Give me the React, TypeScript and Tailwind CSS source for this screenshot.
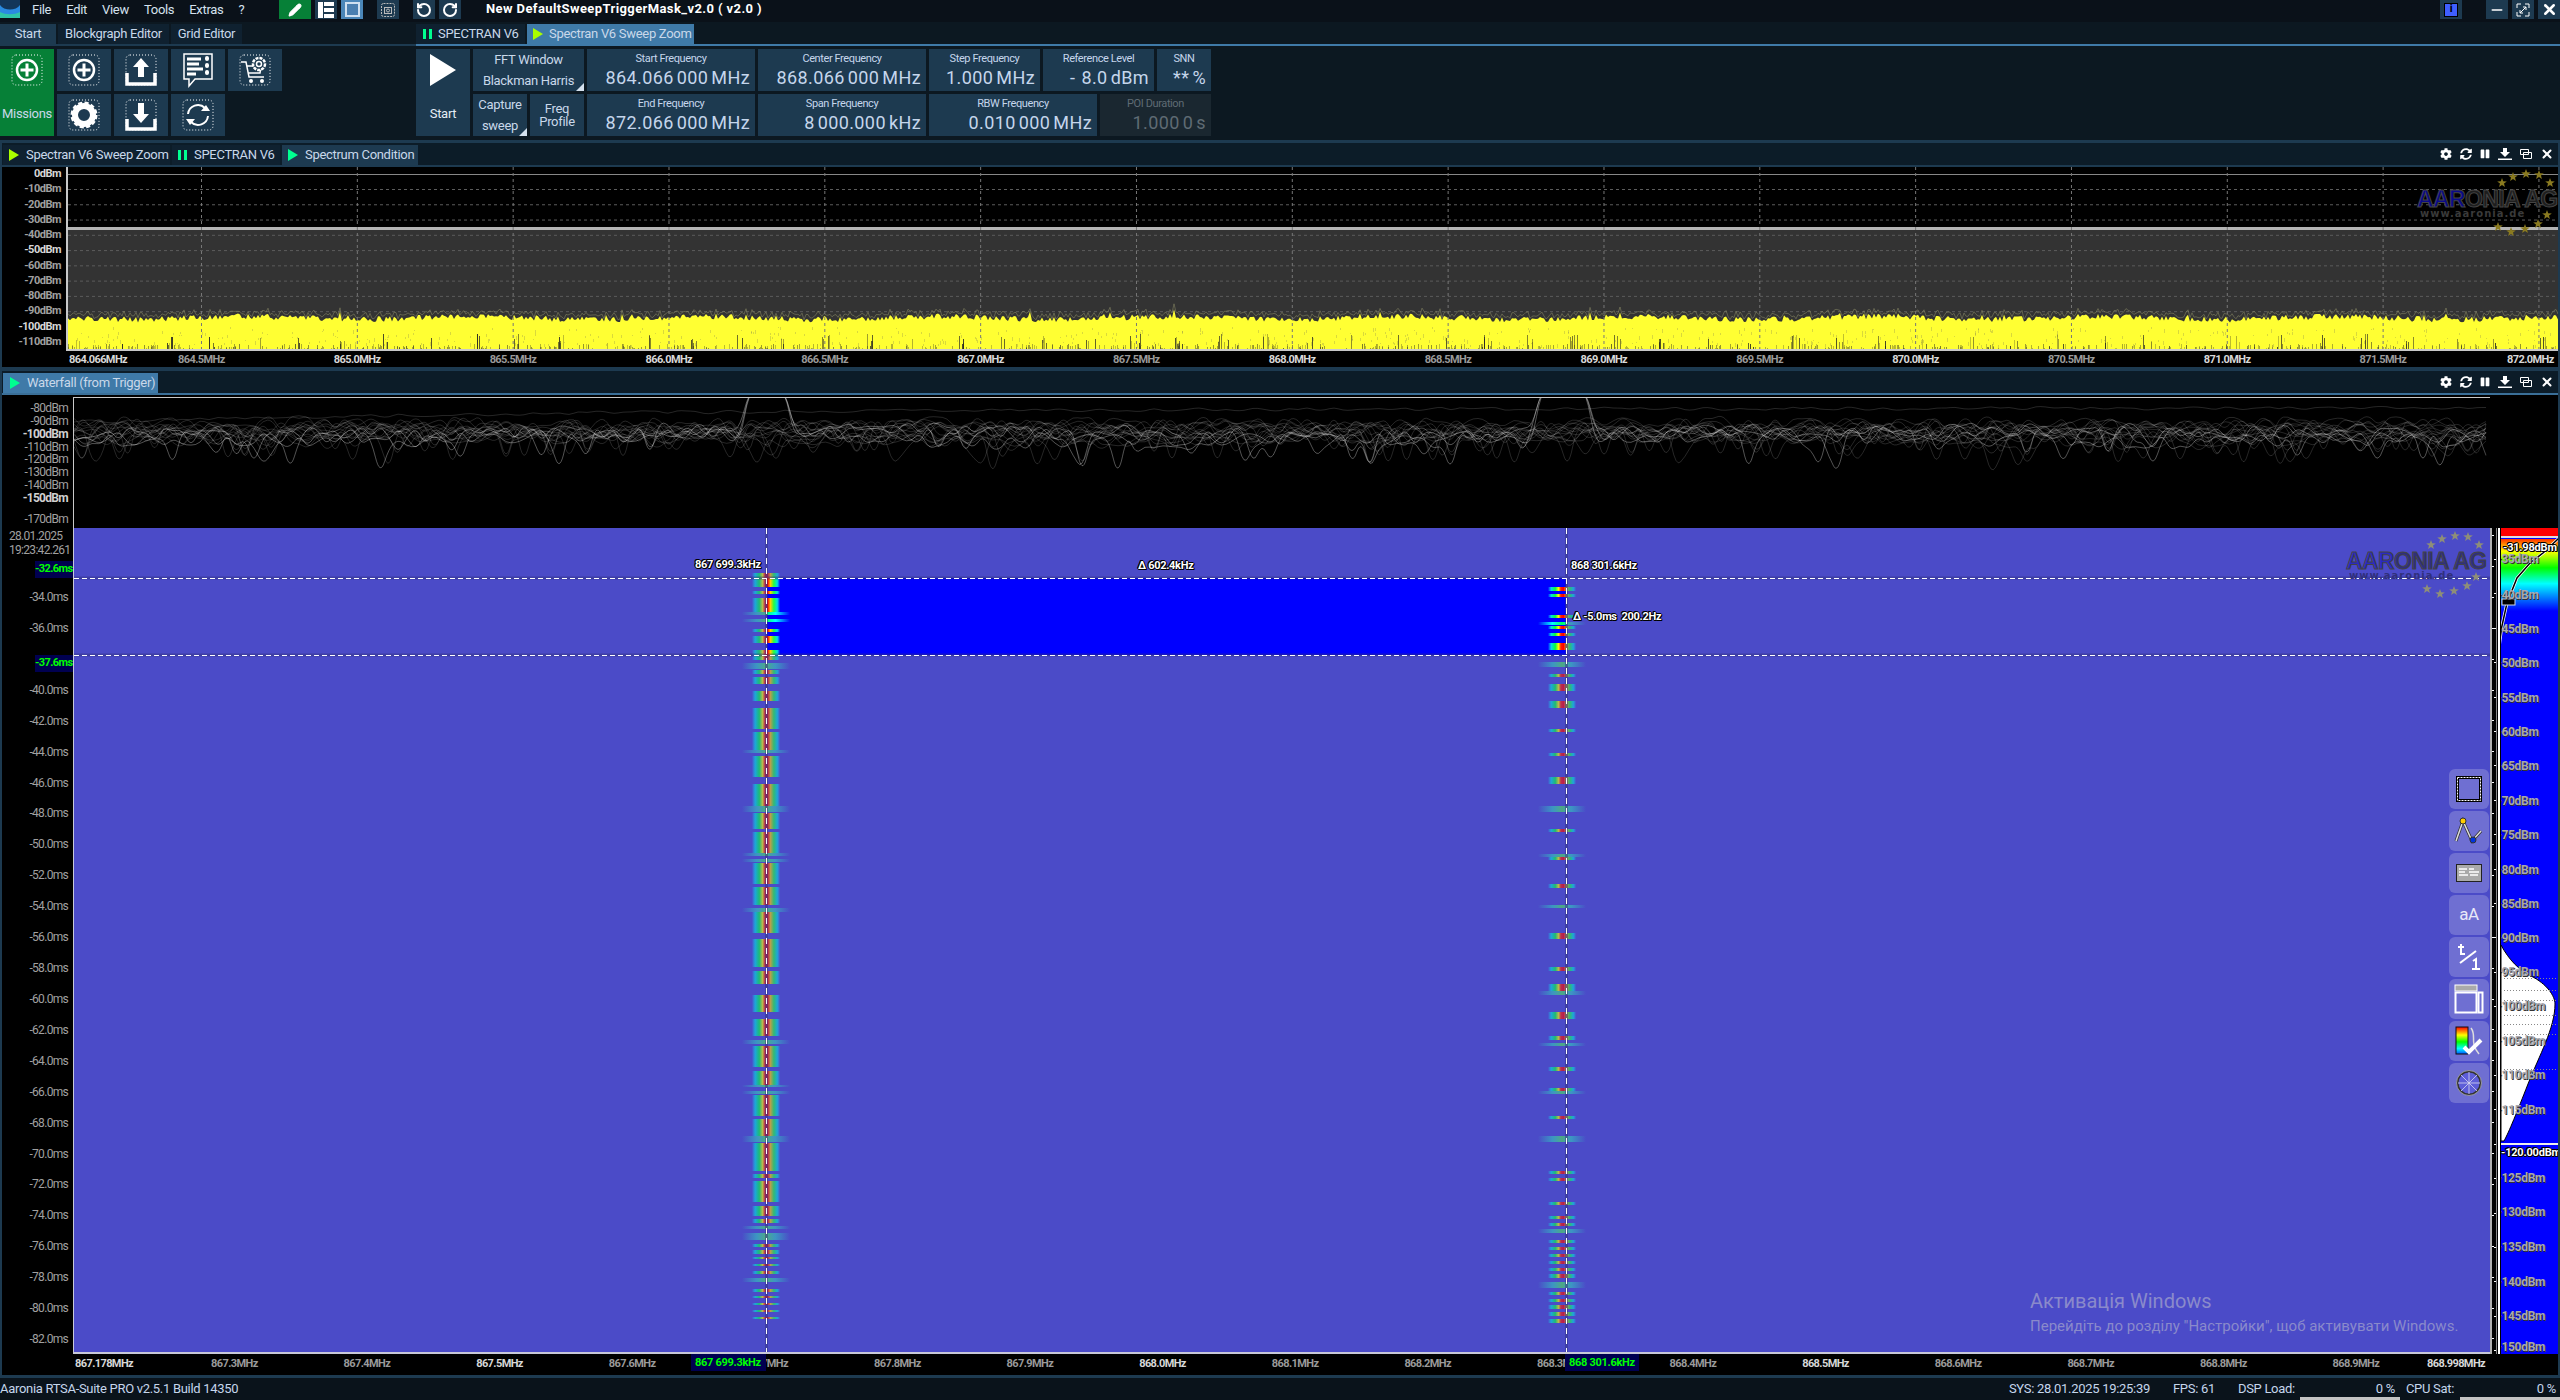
import { Pencil, RotateCcw, RotateCw, X, Minus } from "lucide-react";
import { FaCog, FaSyncAlt, FaPause } from "react-icons/fa";
import type { ReactNode } from "react";

const rng = (seed: number) => () => {
  seed = (seed + 0x6d2b79f5) | 0;
  let t = Math.imul(seed ^ (seed >>> 15), 1 | seed);
  t = (t + Math.imul(t ^ (t >>> 7), 61 | t)) ^ t;
  return ((t ^ (t >>> 14)) >>> 0) / 4294967296;
};

const OUTLINE = "[text-shadow:-1px_0_#000,1px_0_#000,0_-1px_#000,0_1px_#000,1px_1px_#000,-1px_-1px_#000]";

/* ---------- small icons ---------- */

const PlayMark = ({ color }: { color: string }) => (
  <svg width="10" height="12" viewBox="0 0 10 12" className="shrink-0"><path d="M0 0L10 6L0 12Z" fill={color} /></svg>
);
const PauseMark = () => (
  <svg width="9" height="10" viewBox="0 0 9 10" className="shrink-0"><path d="M0 0h3v10H0zM6 0h3v10H6z" fill="#00ff90" /></svg>
);

const Frame = ({ children }: { children: ReactNode }) => (
  <svg width="34" height="34" viewBox="0 0 34 34" fill="none">
    <rect x="2" y="2" width="30" height="30" rx="4" stroke="#fff" strokeWidth="1" strokeDasharray="1 2" />
    {children}
  </svg>
);

const PlusCircle = () => (
  <Frame>
    <circle cx="17" cy="17" r="10" stroke="#fff" strokeWidth="2.5" />
    <path d="M17 10.5v13M10.5 17h13" stroke="#fff" strokeWidth="3" />
  </Frame>
);
const UploadIcon = () => (
  <Frame>
    <path d="M17 5L25 14H20V24H14V14H9Z" fill="#fff" />
    <path d="M3 20V31H31V20" stroke="#fff" strokeWidth="3.5" />
  </Frame>
);
const DownloadIcon = () => (
  <Frame>
    <path d="M17 25L25 16H20V5H14V16H9Z" fill="#fff" />
    <path d="M3 21V31H31V21" stroke="#fff" strokeWidth="3.5" />
  </Frame>
);
const ListBubble = () => (
  <svg width="34" height="36" viewBox="0 0 34 36" fill="none">
    <path d="M3 2H31V27H14L8 34V27H3Z" stroke="#fff" strokeWidth="1.5" />
    <path d="M6 7h14M6 12h12M6 17h16M6 22h9" stroke="#fff" strokeWidth="3" />
    <path d="M26 6v1M26 13v1M26 20v1" stroke="#fff" strokeWidth="4" strokeLinecap="round" />
  </svg>
);
const CartGear = () => (
  <Frame>
    <path d="M3 9H8L11 24H26M9 13H23L22 20H10" stroke="#fff" strokeWidth="1.5" />
    <circle cx="13" cy="28" r="2" fill="#fff" />
    <circle cx="24" cy="28" r="2" fill="#fff" />
    <circle cx="21" cy="11" r="6" fill="#1d3a50" stroke="#fff" strokeWidth="2.5" strokeDasharray="3 1" />
    <circle cx="21" cy="11" r="2.5" stroke="#fff" strokeWidth="1.5" />
  </Frame>
);
const GearIcon = () => (
  <Frame>
    <circle cx="17" cy="17" r="9" stroke="#fff" strokeWidth="6" />
    <circle cx="17" cy="17" r="12" stroke="#fff" strokeWidth="3" strokeDasharray="4 2.3" />
  </Frame>
);
const RefreshIcon = () => (
  <Frame>
    <path d="M7 16A10 10 0 0 1 24 10M27 18A10 10 0 0 1 10 24" stroke="#fff" strokeWidth="2" />
    <path d="M20 13H29L25 7ZM14 21H5L9 27Z" fill="#fff" />
  </Frame>
);

const PanelIcons = () => (
  <div className="ml-auto flex items-center gap-[8px] pr-[4px] text-white">
    <FaCog size={12} />
    <FaSyncAlt size={12} />
    <FaPause size={10} />
    <svg width="14" height="12" viewBox="0 0 14 12"><path d="M5 0h4v4h3L7 9 2 4h3zM0 10.500h14V12H0z" fill="#fff" /></svg>
    <svg width="12" height="10" viewBox="0 0 12 10" fill="none" stroke="#fff"><path d="M.5.500h8v5h-8zM3.500 3.500h8v6h-8z" /></svg>
    <X size={14} strokeWidth={3.5} />
  </div>
);

/* ---------- top chrome ---------- */

const TitleBar = () => (
  <div className="flex h-[22px] items-start bg-[#0a1119] text-[13px] text-[#d5e1ee]">
    <svg width="20" height="18" viewBox="0 0 20 18" className="shrink-0">
      <rect width="20" height="18" fill="#13365a" />
      <path d="M0 5C4 11 16 11 20 5V18H0Z" fill="#2a8ae0" />
      <path d="M0 12C6 15 14 15 20 12V18H0Z" fill="#2fc4a8" />
    </svg>
    <div className="ml-[12px] flex w-[247px] gap-[15px] leading-[19px]">
      <span>File</span><span>Edit</span><span>View</span><span>Tools</span><span>Extras</span><span>?</span>
    </div>
    <div className="flex h-[19px] w-[32px] items-center justify-center bg-[#068037]"><Pencil size={14} fill="#fff" className="text-white" /></div>
    <div className="ml-[4px] flex h-[19px] w-[22px] items-center justify-center bg-[#1d3a50]">
      <svg width="16" height="16" viewBox="0 0 16 16" fill="#fff"><path d="M0 0h5v16H0zM6 0h10v4H6zM6 6h10v4H6zM6 12h10v4H6z" /></svg>
    </div>
    <div className="ml-[4px] flex h-[19px] w-[22px] items-center justify-center bg-[#4a86b8]"><div className="h-[15px] w-[15px] border-2 border-[#cfe0f0] bg-[#4a7fb0]" /></div>
    <div className="ml-[14px] flex h-[19px] w-[22px] items-center justify-center bg-[#1d3a50]">
      <svg width="14" height="14" viewBox="0 0 14 14" fill="none" stroke="#bbb"><rect x=".5" y=".5" width="13" height="13" rx="2" strokeDasharray="2 1" /><rect x="3.500" y="4.500" width="7" height="6" /><circle cx="7" cy="7.500" r="1.500" /></svg>
    </div>
    <div className="ml-[14px] flex h-[19px] w-[22px] items-center justify-center bg-[#1d3a50]"><RotateCcw size={16} strokeWidth={3} className="text-white" /></div>
    <div className="ml-[4px] flex h-[19px] w-[22px] items-center justify-center bg-[#1d3a50]"><RotateCw size={16} strokeWidth={3} className="text-white" /></div>
    <div className="ml-[25px] font-bold leading-[18px] tracking-[0.4px] text-white">New DefaultSweepTriggerMask_v2.0 ( v2.0 )</div>
    <div className="ml-auto flex h-[19px] w-[22px] items-center justify-center bg-[#1d3a50]">
      <div className="flex h-[14px] w-[14px] items-center justify-center border border-black bg-[#3f5fff] text-[11px] font-bold text-black">i</div>
    </div>
    <div className="ml-[24px] flex h-[19px] w-[22px] items-center justify-center bg-[#1d3a50]"><Minus size={16} strokeWidth={2.500} className="text-white" /></div>
    <div className="ml-[4px] flex h-[19px] w-[22px] items-center justify-center bg-[#1d3a50]">
      <svg width="14" height="14" viewBox="0 0 14 14" fill="none" stroke="#fff"><path d="M1 5V1h4M9 1h4v4M13 9v4H9M5 13H1V9" /><path d="M4 10l6-6M7 4h3v3M4 7v3h3" /></svg>
    </div>
    <div className="ml-[4px] flex h-[19px] w-[22px] items-center justify-center bg-[#1d3a50]"><X size={17} strokeWidth={3.500} className="text-white" /></div>
  </div>
);

const TabRow = () => (
  <div className="mt-[2px] flex h-[22px] items-end border-b-2 border-[#1d3a50] bg-[#0c1821] text-[13px] text-[#c9d8ea]">
    <div className="flex h-[20px] w-[56px] items-center justify-center bg-[#1d3a50]">Start</div>
    <div className="ml-[2px] flex h-[20px] w-[111px] items-center justify-center bg-[#0f2130]">Blockgraph Editor</div>
    <div className="ml-[2px] flex h-[20px] w-[71px] items-center justify-center bg-[#0f2130]">Grid Editor</div>
    <div className="relative top-[2px] ml-[174px] flex h-[22px] grow items-start border-b-2 border-[#3f7aa8]">
      <div className="flex h-[20px] w-[109px] items-center gap-[6px] bg-[#0f2130] pl-[7px]"><PauseMark />SPECTRAN V6</div>
      <div className="ml-[2px] flex h-[20px] w-[167px] items-center gap-[6px] bg-[#3f7aa8] pl-[6px]"><PlayMark color="#aaff00" />Spectran V6 Sweep Zoom</div>
    </div>
  </div>
);

const Cell = ({ className = "", children }: { className?: string; children: ReactNode }) => (
  <div className={`flex items-center justify-center bg-[#1d3a50] text-[#c9d8ea] ${className}`}>{children}</div>
);

const Corner = () => <div className="absolute bottom-0 right-0 h-0 w-0 border-b-[8px] border-l-[8px] border-b-[#d5e1ee] border-l-transparent" />;

const ValueCell = ({ label, value, className, dim }: { label: string; value: string; className: string; dim?: boolean }) => (
  <div className={`flex flex-col items-end ${dim ? "bg-[#1a2730] text-[#5f6b74]" : "bg-[#1d3a50] text-[#c5d6ec]"} ${className}`}>
    <div className="w-full pt-[2px] text-center text-[11px] leading-[15px] tracking-[-0.4px]">{label}</div>
    <div className="flex gap-[3px] pr-[5px] text-[18px] leading-[24px] tracking-[0.4px]">
      {value.split(" ").map((part, i) => <span key={i}>{part}</span>)}
    </div>
  </div>
);

const Ribbon = () => (
  <div className="flex h-[92px] bg-[#0c1821] pt-[3px]">
    <div className="grid h-[87px] grid-cols-[repeat(5,54px)] grid-rows-[repeat(2,42px)] gap-[3px]">
      <div className="row-span-2 flex flex-col items-center bg-[#068037] pt-[4px] text-[13px] text-[#c9d8ea]">
        <PlusCircle />
        <span className="mt-[17px]">Missions</span>
      </div>
      <Cell><PlusCircle /></Cell>
      <Cell><UploadIcon /></Cell>
      <Cell><ListBubble /></Cell>
      <Cell><CartGear /></Cell>
      <Cell><GearIcon /></Cell>
      <Cell><DownloadIcon /></Cell>
      <Cell><RefreshIcon /></Cell>
    </div>
    <div className="ml-[134px] grid h-[87px] grid-cols-[repeat(14,54px)] grid-rows-[repeat(2,42px)] gap-[3px] text-[13px]">
      <div className="row-span-2 flex flex-col items-center bg-[#1d3a50] pt-[5px] text-[#e5edf5]">
        <svg width="26" height="32" viewBox="0 0 26 32"><path d="M0 0L26 16L0 32Z" fill="#fff" /></svg>
        <span className="mt-[18px]">Start</span>
      </div>
      <div className="relative col-span-2 flex flex-col items-center gap-[5px] bg-[#1d3a50] pt-[3px] leading-[16px] text-[#c9d8ea]">
        <span>FFT Window</span><span>Blackman Harris</span><Corner />
      </div>
      <ValueCell className="col-span-3" label="Start Frequency" value="864.066 000 MHz" />
      <ValueCell className="col-span-3" label="Center Frequency" value="868.066 000 MHz" />
      <ValueCell className="col-span-2" label="Step Frequency" value="1.000 MHz" />
      <ValueCell className="col-span-2" label="Reference Level" value="-  8.0 dBm" />
      <ValueCell label="SNN" value="** %" className="" />
      <div className="relative flex flex-col items-center gap-[5px] bg-[#1d3a50] pt-[3px] leading-[16px] text-[#c9d8ea]">
        <span>Capture</span><span>sweep</span><Corner />
      </div>
      <div className="flex flex-col items-center justify-center bg-[#1d3a50] leading-[13px] text-[#c9d8ea]"><span>Freq</span><span>Profile</span></div>
      <ValueCell className="col-span-3" label="End Frequency" value="872.066 000 MHz" />
      <ValueCell className="col-span-3" label="Span Frequency" value="8 000.000 kHz" />
      <ValueCell className="col-span-3" label="RBW Frequency" value="0.010 000 MHz" />
      <ValueCell className="col-span-2" dim label="POI Duration" value="1.000 0 s" />
    </div>
  </div>
);

/* ---------- logo ---------- */

const starPath = (cx: number, cy: number, r: number) => {
  let d = "";
  for (let i = 0; i < 10; i++) {
    const a = -Math.PI / 2 + (i * Math.PI) / 5;
    const rr = i % 2 ? r * 0.42 : r;
    d += `${i ? "L" : "M"}${(cx + rr * Math.cos(a)).toFixed(1)} ${(cy + rr * Math.sin(a)).toFixed(1)}`;
  }
  return d + "Z";
};
const STARS = [[85, 10], [96, 4], [109, 1], [122, 2], [133, 10], [130, 42], [121, 51], [108, 56], [94, 59], [81, 54]];

const Logo = ({ className, star, aar, rest, www }: { className: string; star: string; aar: string; rest: string; www: string }) => (
  <div className={`pointer-events-none absolute h-[64px] w-[145px] font-['Liberation_Sans'] ${className}`}>
    <svg width="145" height="64" className="absolute -top-[1px] left-0 overflow-visible">
      {STARS.map(([x, y], i) => <path key={i} d={starPath(x, y + 1, 5)} fill={star} />)}
    </svg>
    <div className={`absolute left-0 top-[13px] whitespace-nowrap text-[23px] font-bold leading-[26px] tracking-[-0.6px] [-webkit-text-stroke:1px_#444] ${rest}`}>
      <span className={aar}>AAR</span>ONIA AG
    </div>
    <div className={`absolute left-[3px] top-[35px] whitespace-nowrap font-['DejaVu_Sans'] text-[10px] font-bold leading-[12px] tracking-[1px] ${www}`}>www.aaronia.de</div>
  </div>
);

/* ---------- spectrum panel ---------- */

const Tab = ({ icon, label, className }: { icon: ReactNode; label: string; className: string }) => (
  <div className={`mr-[2px] flex h-[20px] items-center gap-[7px] pl-[6px] ${className}`}>{icon}{label}</div>
);

const DB_LABELS = ["0", "-10", "-20", "-30", "-40", "-50", "-60", "-70", "-80", "-90", "-100", "-110"];

const SpectrumTrace = () => {
  const r = rng(11);
  const W = 2494;
  let d = "M0 184";
  let ghost = "";
  for (let x = 0; x <= W; x += 2) {
    const bump = r() < 0.04 ? -6 * r() : 0;
    const y = 148 + r() * 6 + bump + 1.5 * Math.sin(x / 37);
    d += `L${x} ${y.toFixed(1)}`;
    ghost += `${x ? "L" : "M"}${x} ${(y - 2 - r() * 4).toFixed(1)}`;
  }
  d += `L${W} 184Z`;
  const spikes = [];
  for (let i = 0; i < 1000; i++) {
    const x = r() * W;
    const cluster = Math.sin(x / 7) > 0.75;
    const h = cluster ? 3 + r() * 13 : 1 + r() * 5;
    spikes.push(<rect key={i} x={x.toFixed(0)} y={(183 - h).toFixed(0)} width="1" height={h.toFixed(0)} fill="#222" opacity={(0.25 + r() * (cluster ? 0.6 : 0.25)).toFixed(2)} />);
  }
  const holes = [];
  for (let i = 0; i < 500; i++) {
    holes.push(<rect key={i} x={(r() * W).toFixed(0)} y={(160 + r() * 18).toFixed(0)} width="1" height={(1 + r() * 3).toFixed(0)} fill="#665" opacity="0.25" />);
  }
  return (
    <>
      <path d={ghost} fill="none" stroke="#8b8b66" strokeWidth="1" opacity="0.55" />
      <path d={d} fill="#ffff33" />
      {holes}
      {spikes}
    </>
  );
};

const SpectrumPanel = () => (
  <section className="mt-[2px] border-x-2 border-t-[3px] border-[#1d3a50] bg-[#0c1c28]">
    <div className="flex h-[22px] items-end text-[13px] text-[#c9d8ea]">
      <div className="flex pl-[1px]">
        <Tab className="w-[167px] bg-[#0f2130]" icon={<PlayMark color="#aaff00" />} label="Spectran V6 Sweep Zoom" />
        <Tab className="w-[108px] bg-[#0f2130]" icon={<PauseMark />} label="SPECTRAN V6" />
        <Tab className="h-[20px] w-[136px] bg-[#1d3a50]" icon={<PlayMark color="#00ff90" />} label="Spectrum Condition" />
      </div>
      <div className="ml-auto self-center"><PanelIcons /></div>
    </div>
    <div className="h-[2px] bg-[#1d3a50]" />
    <div className="h-[200px] bg-black">
      <div className="flex h-[184px]">
        <div className="relative w-[64px] shrink-0 text-[11px] font-bold tracking-[-0.5px]">
          {DB_LABELS.map((l, i) => (
            <div key={l} className="absolute right-[5px] flex items-center leading-[14px]" style={{ top: i * 15.27 }}>
              <span className={i % 5 === 0 ? "text-[#d8d8d8]" : "text-[#a0a0a0]"}>{l}dBm</span>
            </div>
          ))}
        </div>
        <div className="relative grow overflow-hidden border-b-2 border-l-2 border-[#c8c8c8] bg-black">
          <svg className="absolute inset-0" width="2494" height="184">
            <rect y="61" width="2494" height="123" fill="#333" />
            {DB_LABELS.slice(1).map((l, i) => <path key={l} d={`M0 ${22.500 + i * 15.27}H2494`} stroke="#5c5c5c" strokeDasharray="3 3" />)}
            <path d="M0 7.500H2494" stroke="#888" />
            <SpectrumTrace />
            <rect y="60" width="2494" height="3" fill="#b4b4b4" />
            {Array.from({ length: 16 }, (_, i) => <path key={i} d={`M${133.500 + i * 155.83} 0V184`} stroke="#777" strokeDasharray="3 3" />)}
          </svg>
          <Logo className="left-[2349px] top-[6px]" star="#8a7a20" aar="text-[#0a0a8a]" rest="text-[#1e1e1e]" www="text-[#3a3a3a]" />
        </div>
      </div>
      <div className="relative h-[16px] text-[11px] font-bold leading-[18px] tracking-[-0.6px]">
        <span className="absolute left-[67px] text-[#d8d8d8]">864.066MHz</span>
        {Array.from({ length: 16 }, (_, i) => {
          const bright = i % 2 === 1;
          const mhz = (864.5 + i * 0.5).toFixed(1);
          return (
            <span key={mhz} className={`absolute ${bright ? "text-[#d8d8d8]" : "text-[#9a9a9a]"}`} style={{ left: i === 15 ? 2505 : 176 + i * 155.83 }}>
              {mhz}MHz
            </span>
          );
        })}
      </div>
    </div>
  </section>
);

/* ---------- waterfall ---------- */

const BANDS_L: [number, number, number?][] = [
  [573, 587], [591, 594], [598, 612], [612, 615, 1], [619, 622, 1], [629, 632], [636, 643], [650, 660], [663, 669, 1], [670, 674], [677, 684],
  [691, 701], [708, 729], [732, 750], [750, 753, 1], [756, 777], [784, 806], [806, 812, 1], [813, 829], [832, 853], [853, 856, 1], [859, 862, 1],
  [863, 884], [887, 905], [908, 912, 1], [912, 933], [939, 967], [971, 984], [995, 1012], [1019, 1036], [1040, 1044, 1], [1046, 1067], [1071, 1085],
  [1085, 1087, 1], [1091, 1094, 1], [1095, 1116], [1119, 1136], [1136, 1142, 1], [1143, 1171], [1174, 1178], [1181, 1202], [1206, 1216], [1219, 1223],
  [1226, 1229, 1], [1233, 1240, 1], [1244, 1247], [1250, 1254], [1257, 1259], [1264, 1266], [1271, 1274], [1278, 1282, 1], [1289, 1292], [1296, 1298],
  [1303, 1305], [1310, 1312], [1317, 1319],
];
const BANDS_R: [number, number, number?][] = [
  [587, 591], [594, 597], [615, 618], [622, 625, 1], [626, 629], [633, 636], [643, 650], [662, 667, 1], [674, 677], [684, 691], [701, 708], [729, 732],
  [753, 756], [777, 784], [806, 812, 1], [829, 832], [854, 857, 1], [857, 860], [884, 888], [905, 908, 1], [933, 939], [967, 971], [984, 991], [991, 995, 1],
  [1012, 1019], [1036, 1040], [1043, 1046, 1], [1067, 1071], [1088, 1091], [1091, 1094, 1], [1116, 1119], [1136, 1142, 1], [1171, 1174], [1178, 1181],
  [1202, 1205], [1216, 1219], [1223, 1226], [1229, 1233, 1], [1240, 1243], [1247, 1250], [1254, 1257], [1261, 1264], [1268, 1271], [1274, 1278],
  [1282, 1288, 1], [1292, 1295], [1299, 1302], [1305, 1309], [1312, 1316], [1319, 1323],
];

const OX = 73;
const OY = 528;

const Bands = ({ data, cx, sat }: { data: [number, number, number?][]; cx: number; sat: boolean }) => (
  <>
    {data.map(([a, b, wide], i) =>
      wide ? (
        <rect key={i} x={cx - 24 - OX} y={a - OY} width="48" height={b - a} fill={sat ? "url(#wSat)" : "url(#wide)"} />
      ) : (
        <rect key={i} x={cx - 14 - OX} y={a - OY} width="28" height={b - a} fill={sat ? "url(#hot)" : "url(#warm)"} />
      ),
    )}
  </>
);

const Stops = ({ alpha }: { alpha: number }) => (
  <>
    <stop offset="0" stopColor="#00ffff" stopOpacity="0" />
    <stop offset="0.12" stopColor="#00e0e0" stopOpacity={alpha} />
    <stop offset="0.26" stopColor="#00ff40" stopOpacity={alpha} />
    <stop offset="0.38" stopColor="#ffff00" stopOpacity={alpha} />
    <stop offset="0.46" stopColor="#ff2000" stopOpacity={alpha} />
    <stop offset="0.56" stopColor="#ff0000" stopOpacity={alpha} />
    <stop offset="0.66" stopColor="#ffd000" stopOpacity={alpha} />
    <stop offset="0.78" stopColor="#20ff40" stopOpacity={alpha} />
    <stop offset="0.9" stopColor="#00e0e0" stopOpacity={alpha} />
    <stop offset="1" stopColor="#00ffff" stopOpacity="0" />
  </>
);

const WaterfallMap = () => (
  <svg className="absolute inset-0" width="2417" height="826">
    <defs>
      <linearGradient id="warm"><Stops alpha={0.62} /></linearGradient>
      <linearGradient id="hot"><Stops alpha={1} /></linearGradient>
      <linearGradient id="wide">
        <stop offset="0" stopColor="#30d0c0" stopOpacity="0" />
        <stop offset="0.3" stopColor="#30d0c0" stopOpacity="0.55" />
        <stop offset="0.5" stopColor="#50c070" stopOpacity="0.8" />
        <stop offset="0.7" stopColor="#30d0c0" stopOpacity="0.55" />
        <stop offset="1" stopColor="#30d0c0" stopOpacity="0" />
      </linearGradient>
      <linearGradient id="wSat">
        <stop offset="0" stopColor="#00ffff" stopOpacity="0" />
        <stop offset="0.3" stopColor="#00ffff" />
        <stop offset="0.5" stopColor="#00ff60" />
        <stop offset="0.7" stopColor="#00ffff" />
        <stop offset="1" stopColor="#00ffff" stopOpacity="0" />
      </linearGradient>
      <clipPath id="sel"><rect x={766 - OX} y="50" width="799" height="77" /></clipPath>
    </defs>
    <Bands data={BANDS_L} cx={765} sat={false} />
    <Bands data={BANDS_R} cx={1561} sat={false} />
    <rect x={766 - OX} y="50" width="799" height="77" fill="#0000ff" />
    <g clipPath="url(#sel)">
      <Bands data={BANDS_L} cx={765} sat />
      <Bands data={BANDS_R} cx={1561} sat />
    </g>
    <path d={`M0 50H2417M0 127H2417M${765.5 - OX} 0V826M${1565.5 - OX} 0V826`} stroke="#30307a" strokeWidth="3" opacity="0.45" />
    <path d={`M0 50.500H2417M0 127.500H2417`} stroke="#fff" strokeDasharray="5 3" />
    <path d={`M${765.5 - OX} 0V826M${1565.5 - OX} 0V826`} stroke="#fff" strokeDasharray="6 4" />
  </svg>
);

const TopTraces = () => {
  const lines = [];
  for (let s = 0; s < 18; s++) {
    const r = rng(s * 97 + 5);
    const base = 30 + r() * 10;
    const peak = s < 3;
    let d = "";
    let px = 0;
    let py = base;
    for (let x = 0; x <= 2417; x += 9) {
      let y = base + (r() - 0.5) * 20 + Math.sin(x / 180 + s) * 4;
      if (r() < 0.07) y += 12 + r() * 22;
      if (peak && ((x > 672 && x < 712) || (x > 1466 && x < 1516))) y = -6;
      if (s === 17) y = 8 + 14 * Math.exp(-x / 500) + r() * 4;
      d += x === 0 ? `M0 ${y.toFixed(1)}` : `Q${px} ${py.toFixed(1)} ${(px + x) / 2} ${((py + y) / 2).toFixed(1)}`;
      px = x;
      py = y;
    }
    d += `L${px} ${py.toFixed(1)}`;
    lines.push(<path key={s} d={d} fill="none" stroke="#fff" strokeWidth="1" opacity={s < 3 ? 0.32 : 0.15} />);
  }
  return (
    <svg className="absolute inset-0" width="2417" height="131">
      {lines}
    </svg>
  );
};

const TOP_DB = [["-80", 408], ["-90", 421], ["-100", 434], ["-110", 447], ["-120", 459], ["-130", 472], ["-140", 485], ["-150", 498], ["-170", 519]] as const;

const TIMES = Array.from({ length: 25 }, (_, i) => 34 + i * 2).filter((t) => t !== 38);

const AxisText = ({ top, bright, children }: { top: number; bright?: boolean; children: ReactNode }) => (
  <div className={`absolute right-[5px] text-[12px] leading-[14px] tracking-[-0.7px] ${bright ? "font-bold text-[#d0d0d0]" : "text-[#a0a0a0]"}`} style={{ top: top - 7 }}>
    {children}
  </div>
);

const GreenMark = ({ label, top }: { label: string; top: number }) => (
  <div className="absolute left-[33px] flex h-[17px] w-[38px] items-center bg-[#000050] text-[11px] font-bold tracking-[-0.6px] text-[#00ff00]" style={{ top }}>
    {label}
  </div>
);

const TOOL_BTN = "flex h-[40px] w-[40px] items-center justify-center rounded-[6px] bg-[#6f6fd2]";

const Toolbar = () => (
  <div className="absolute left-[2375px] top-[241px] flex flex-col gap-[2px]">
    <div className={TOOL_BTN}>
      <svg width="26" height="26" viewBox="0 0 26 26" fill="none"><rect x="1.500" y="1.500" width="23" height="23" stroke="#000" strokeWidth="3" /><rect x="1.500" y="1.500" width="23" height="23" stroke="#fff" strokeWidth="1" strokeDasharray="2 1" /></svg>
    </div>
    <div className={TOOL_BTN}>
      <svg width="30" height="28" viewBox="0 0 30 28" fill="none">
        <path d="M2 24L9 4L18 24L27 14" stroke="#333" strokeWidth="3" />
        <path d="M2 24L9 4L18 24L27 14" stroke="#ddd" strokeWidth="1.500" />
        <circle cx="9" cy="4" r="3" fill="#ffcc00" stroke="#333" />
        <circle cx="19" cy="23" r="3" fill="#0033dd" stroke="#333" />
      </svg>
    </div>
    <div className={TOOL_BTN}>
      <svg width="26" height="18" viewBox="0 0 26 18"><rect x=".5" y=".5" width="25" height="17" fill="#aaa" stroke="#222" /><path d="M3 5h8M3 8h6M3 11h9M13 5h5M13 8h10M14 11h8" stroke="#fff" strokeWidth="1.500" /></svg>
    </div>
    <div className={`${TOOL_BTN} font-['Roboto'] text-[17px] text-[#e8e8f8]`}>aA</div>
    <div className={TOOL_BTN}>
      <svg width="26" height="28" viewBox="0 0 26 28" fill="none" stroke="#222">
        <path d="M5 1V11H9M2 4H8" stroke="#fff" strokeWidth="2" />
        <path d="M4 20L20 8" stroke="#fff" strokeWidth="2" />
        <path d="M17 18L20 16V26M16 26H24" stroke="#fff" strokeWidth="2" />
      </svg>
    </div>
    <div className={TOOL_BTN}>
      <svg width="30" height="30" viewBox="0 0 30 30" fill="none" stroke="#fff"><rect x="1" y="1" width="22" height="6" fill="#aaa" /><rect x="1.500" y="8.500" width="21" height="20" strokeWidth="2" /><rect x="24.500" y="8.500" width="4" height="20" strokeWidth="2" /></svg>
    </div>
    <div className={TOOL_BTN}>
      <svg width="28" height="30" viewBox="0 0 28 30">
        <defs>
          <linearGradient id="mini" x1="0" y1="0" x2="0" y2="1">
            <stop offset="0" stopColor="#ff0000" /><stop offset="0.3" stopColor="#ffff00" /><stop offset="0.55" stopColor="#00ff00" /><stop offset="0.8" stopColor="#00ffff" /><stop offset="1" stopColor="#0050ff" />
          </linearGradient>
        </defs>
        <rect x="1" y="1" width="12" height="27" fill="url(#mini)" stroke="#111" />
        <path d="M16 2C22 10 14 16 24 28" fill="none" stroke="#ddd" strokeWidth="1.500" />
        <path d="M9 21L14 26L26 14" fill="none" stroke="#fff" strokeWidth="4" />
      </svg>
    </div>
    <div className={TOOL_BTN}>
      <svg width="28" height="28" viewBox="0 0 28 28" fill="none">
        <circle cx="14" cy="14" r="11.500" fill="#5d5dd8" stroke="#333" strokeWidth="2" />
        <circle cx="14" cy="14" r="12.500" stroke="#aaa" strokeWidth="0.800" />
        <path d="M14 3V25M3 14H25M6 6L22 22M22 6L6 22" stroke="#d8d8f0" strokeWidth="0.800" />
      </svg>
    </div>
  </div>
);

const CB_LABELS = [[35, 559], [40, 595], [45, 629], [50, 663], [55, 698], [60, 732], [65, 766], [70, 801], [75, 835], [80, 870], [85, 904], [90, 938], [95, 972], [100, 1006], [105, 1041], [110, 1075], [115, 1110], [125, 1178], [130, 1212], [135, 1247], [140, 1282], [145, 1316], [150, 1347]];

const ColorBar = () => (
  <div className="relative grow overflow-hidden bg-[#0000ff]">
    <svg className="absolute inset-0" width="59" height="826">
      <defs>
        <linearGradient id="cb" x1="0" y1="0" x2="0" y2="1">
          <stop offset="0" stopColor="#ff3000" /><stop offset="0.17" stopColor="#ffff00" /><stop offset="0.4" stopColor="#00ff00" /><stop offset="0.62" stopColor="#00ffff" /><stop offset="1" stopColor="#0000ff" />
        </linearGradient>
      </defs>
      <rect width="59" height="8" fill="#ff0000" />
      <rect y="8" width="59" height="2" fill="#ddd" />
      <rect y="11" width="59" height="72" fill="url(#cb)" />
      <path d="M0 417C8 432 18 442 30 448C46 456 54 468 54 476C54 500 38 528 27 556C16 584 8 604 3 613H0Z" fill="#fff" stroke="#000" />
      {[450, 462, 472, 487, 496, 506, 541].map((y) => <path key={y} d={`M0 ${y + 0.5}H59`} stroke="#888" strokeDasharray="1 2" />)}
      <rect y="615" width="59" height="2" fill="#eee" />
      <path d="M-2 120L0.700 99L6 75L16 50L29 35L42 25L57 11" fill="none" stroke="#fff" strokeWidth="3" />
      <path d="M-2 120L0.700 99L6 75L16 50L29 35L42 25L57 11" fill="none" stroke="#000" strokeWidth="1.500" />
      <rect x="1" y="71" width="13" height="6" fill="#000" stroke="#cfd8e8" />
    </svg>
    {CB_LABELS.map(([db, y]) => (
      <span key={db} className="absolute left-[-4px] text-[12px] font-bold leading-[14px] tracking-[-0.3px] text-[#a8a8b0] [text-shadow:1px_1px_0_#333]" style={{ top: y - 528 - 7 }}>
        -{db}dBm
      </span>
    ))}
    <span className={`absolute left-[2px] top-[13px] text-[11px] font-bold leading-[14px] tracking-[-0.2px] text-white ${OUTLINE}`}>-31.98dBm</span>
    <span className={`absolute left-0 top-[618px] text-[11px] font-bold leading-[14px] tracking-[-0.2px] text-white ${OUTLINE}`}>-120.00dBm</span>
  </div>
);

const BlackStrip = () => (
  <div className="relative w-[11px] shrink-0 border-l-2 border-[#b0b0b0] bg-black">
    <div className="absolute bottom-0 right-[1px] top-0 w-[2px] bg-white" />
    <div className="absolute bottom-0 right-[4px] top-0 w-[1px] bg-[#888]" />
    {Array.from({ length: 27 }, (_, i) => <div key={i} className="absolute left-0 h-[1px] w-[2px] bg-white" style={{ top: 7 + i * 30.9 }} />)}
    {Array.from({ length: 24 }, (_, i) => <div key={i} className="absolute left-[2px] h-[1px] w-[2px] bg-white" style={{ top: 31 + i * 34.4 }} />)}
  </div>
);

const FREQS = Array.from({ length: 17 }, (_, i) => (867.3 + i * 0.1).toFixed(1));

const WaterfallPanel = () => (
  <section className="border-x-2 border-b-[3px] border-t-4 border-[#1d3a50] bg-[#0c1c28]">
    <div className="flex h-[22px] items-end text-[13px] text-[#c9d8ea]">
      <div className="ml-[1px] flex h-[20px] w-[155px] items-center gap-[7px] bg-[#3f7aa8] pl-[7px]"><PlayMark color="#00ff90" />Waterfall (from Trigger)</div>
      <div className="ml-auto self-center"><PanelIcons /></div>
    </div>
    <div className="h-[2px] bg-[#3a6f98]" />
    <div className="h-[980px] bg-black">
      <div className="flex h-[133px]">
        <div className="relative w-[71px] shrink-0">
          {TOP_DB.map(([l, y]) => <AxisText key={l} top={y - 395} bright={l === "-100" || l === "-150"}>{l}dBm</AxisText>)}
        </div>
        <div className="relative mt-[2px] w-[2417px] overflow-hidden border-l border-t border-[#c8c8c8]"><TopTraces /></div>
      </div>
      <div className="flex h-[826px]">
        <div className="relative w-[71px] shrink-0">
          <div className="absolute left-[7px] top-0 pt-[1px] text-[12px] leading-[14px] tracking-[-0.7px] text-[#a0a0a0]">28.01.2025<br />19:23:42.261</div>
          <GreenMark label="-32.6ms" top={33} />
          <GreenMark label="-37.6ms" top={127} />
          {TIMES.map((t) => <AxisText key={t} top={69 + ((t - 34) / 2) * 30.92}>-{t}.0ms</AxisText>)}
        </div>
        <div className="relative w-[2417px] shrink-0 overflow-hidden border-b-2 border-l border-[#c8c8d8] bg-[#4b4bc8]">
          <WaterfallMap />
          <Logo className="left-[2272px] top-[7px]" star="#8e8e78" aar="text-[#2a2ac0]" rest="text-[#30307c]" www="text-[#30307c]" />
          <span className={`absolute left-[621px] top-[30px] text-[11px] font-bold leading-[14px] text-white ${OUTLINE}`}>867 699.3kHz</span>
          <span className={`absolute left-[1497px] top-[31px] text-[11px] font-bold leading-[14px] text-white ${OUTLINE}`}>868 301.6kHz</span>
          <span className={`absolute left-[1064px] top-[31px] text-[11px] font-bold leading-[14px] text-white ${OUTLINE}`}>Δ 602.4kHz</span>
          <span className={`absolute left-[1499px] top-[82px] whitespace-pre text-[11px] font-bold leading-[14px] text-white ${OUTLINE}`}>Δ -5.0ms  200.2Hz</span>
          <Toolbar />
          <div className="absolute left-[1956px] top-[760px] tracking-normal text-[#8a8acb]">
            <div className="text-[20px] leading-[26px]">Активація Windows</div>
            <div className="mt-[3px] text-[15px] leading-[18px]">Перейдіть до розділу "Настройки", щоб активувати Windows.</div>
          </div>
        </div>
        <BlackStrip />
        <ColorBar />
      </div>
      <div className="relative h-[21px] text-[11px] font-bold leading-[20px] tracking-[-0.6px]">
        <span className="absolute left-[73px] text-[#d8d8d8]">867.178MHz</span>
        {FREQS.map((f, i) => (
          <span key={f} className={`absolute ${i % 5 === 2 ? "text-[#d8d8d8]" : "text-[#9a9a9a]"}`} style={{ left: 209 + i * 132.6 }}>{f}MHz</span>
        ))}
        <span className="absolute left-[2425px] text-[#d8d8d8]">868.998MHz</span>
        <span className="absolute left-[689px] top-0 h-[17px] w-[75px] bg-[#000050] pl-[4px] leading-[18px] tracking-[-0.3px] text-[#00ff00]">867 699.3kHz</span>
        <span className="absolute left-[1563px] top-0 h-[17px] w-[74px] bg-[#000050] pl-[4px] leading-[18px] tracking-[-0.3px] text-[#00ff00]">868 301.6kHz</span>
      </div>
    </div>
  </section>
);

const StatusBar = () => (
  <div className="flex h-[22px] items-center bg-[#0a131b] text-[13px] leading-[22px] text-[#c5d6ec]">
    <span>Aaronia RTSA-Suite PRO v2.5.1 Build 14350</span>
    <span className="ml-auto">SYS: 28.01.2025 19:25:39</span>
    <span className="ml-[23px]">FPS: 61</span>
    <span className="ml-[23px]">DSP Load:</span>
    <div className="ml-[5px] flex h-[22px] w-[100px] items-start justify-end border-b-[3px] border-[#c4c4c4] pr-[5px]">0 %</div>
    <span className="ml-[6px]">CPU Sat:</span>
    <div className="ml-[6px] flex h-[22px] w-[100px] items-start justify-end border-b-[3px] border-[#c4c4c4] pr-[4px]">0 %</div>
  </div>
);

export default function App() {
  return (
    <div className="h-[1400px] w-[2560px] overflow-hidden whitespace-nowrap bg-[#0c1821] font-['Roboto',sans-serif] tracking-[-0.3px]">
      <TitleBar />
      <TabRow />
      <Ribbon />
      <SpectrumPanel />
      <WaterfallPanel />
      <StatusBar />
    </div>
  );
}
